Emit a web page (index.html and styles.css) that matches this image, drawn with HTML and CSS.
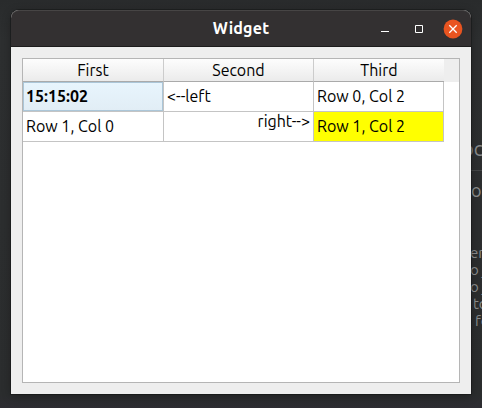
FILE: index.html
```html
<!DOCTYPE html>
<html lang="en">
<head>
<meta charset="utf-8">
<title>Widget</title>
<link rel="stylesheet" href="styles.css">
</head>
<body>
<div class="desktop">
  <main class="window">
    <header class="titlebar">
      <span></span>
      <h1 class="title">Widget</h1>
      <div class="controls">
        <svg width="10" height="10" viewBox="0 0 10 10"><path d="M1 7.5h8" stroke="#fff"/></svg>
        <svg width="10" height="10" viewBox="0 0 10 10"><path d="M1.5 1.5h7v7h-7z" stroke="#fff" fill="none"/></svg>
        <svg width="20" height="20" viewBox="0 0 20 20"><circle cx="10" cy="10" r="9.4" fill="#e95420"/><path d="M6.3 6.3l7.4 7.4M13.7 6.3l-7.4 7.4" stroke="#fff" stroke-width="1.3"/></svg>
      </div>
    </header>
    <section class="content">
      <div class="view">
        <div class="row head"><div class="th">First</div><div class="th">Second</div><div class="th">Third</div><div class="filler"></div></div>
        <div class="row"><div class="td selected">15:15:02</div><div class="td">&lt;--left</div><div class="td">Row 0, Col 2</div></div>
        <div class="row"><div class="td">Row 1, Col 0</div><div class="td right">right--&gt;</div><div class="td yellow">Row 1, Col 2</div></div>
      </div>
    </section>
  </main>
  <aside class="behind">
    <div class="big">oc</div>
    <div class="medium">o</div>
    <div class="small"><p>er</p><p>o j</p><p>o j</p><p class="indent">to</p><p class="indent2">fo</p></div>
  </aside>
</div>
</body>
</html>
```

FILE: styles.css
```css
* { box-sizing: border-box; }
body { margin: 0; background: #2b2d2e; font: 16px/20px Ubuntu, "Noto Sans", sans-serif; color: #000; }
.desktop {
  width: 482px;
  height: 408px;
  padding: 10px 0 0 11px;
  display: flex;
  overflow: hidden;
  background: linear-gradient(#292b2c, #2d2f30 40px, #2b2d2e 395px, #2d2c32 408px);
}
.window {
  position: relative;
  z-index: 1;
  flex: none;
  width: 460px;
  height: 384px;
  display: flex;
  flex-direction: column;
  background: #eee;
  border-radius: 8px 8px 0 0;
  box-shadow: 0 0 0 1px rgba(0, 0, 0, .25), 0 2px 10px rgba(0, 0, 0, .3);
}
.titlebar {
  height: 37px;
  display: grid;
  grid-template-columns: 1fr auto 1fr;
  align-items: center;
  background: #333031;
  border-top: 1px solid #474545;
  border-bottom: 1px solid #1d1c1c;
  border-radius: 8px 8px 0 0;
}
.title { margin: 0; padding-bottom: 2px; color: #fff; font-size: 16px; font-weight: 700; letter-spacing: .2px; }
.controls { display: flex; justify-content: flex-end; align-items: center; gap: 24px; padding-right: 8px; }
.controls svg:last-child { margin-left: -5px; }
.content { flex: 1; padding: 11px; }
.view { width: 438px; height: 325px; background: #fff; border: 1px solid #b5b5b5; }
.row { display: grid; grid-template-columns: 141px 150px 130px 1fr; height: 30px; }
.head { height: 23px; }
.th {
  display: flex;
  justify-content: center;
  align-items: center;
  background: linear-gradient(#fdfdfd, #ebebeb);
  border-right: 1px solid #ccc;
  border-bottom: 1px solid #aaa;
}
.th:nth-child(3) { border-right: 0; }
.filler { background: #eee; }
.td {
  display: flex;
  align-items: center;
  padding: 0 3px 2px;
  border-right: 1px solid #c4c4c4;
  border-bottom: 1px solid #c4c4c4;
  white-space: nowrap;
}
.selected {
  background: linear-gradient(#e8f5fd, #e1edf5);
  box-shadow: inset 0 0 0 1px #abc6d8;
  font-weight: 700;
}
.right { justify-content: flex-end; align-items: flex-start; line-height: 18px; }
.yellow { background: #ff0; }
.behind { flex: none; width: 60px; color: #8a8c8d; white-space: nowrap; }
.big { height: 161px; padding-top: 129px; margin-left: -9px; border-bottom: 1px solid #444647; font-size: 20px; }
.medium { height: 73px; padding-top: 9px; margin-left: 0; font-size: 18px; }
.small { margin-left: -1px; font-size: 15px; line-height: 17px; }
.small p { margin: 0; }
.indent { padding-left: 3px; }
.indent2 { padding-left: 5px; }
```
